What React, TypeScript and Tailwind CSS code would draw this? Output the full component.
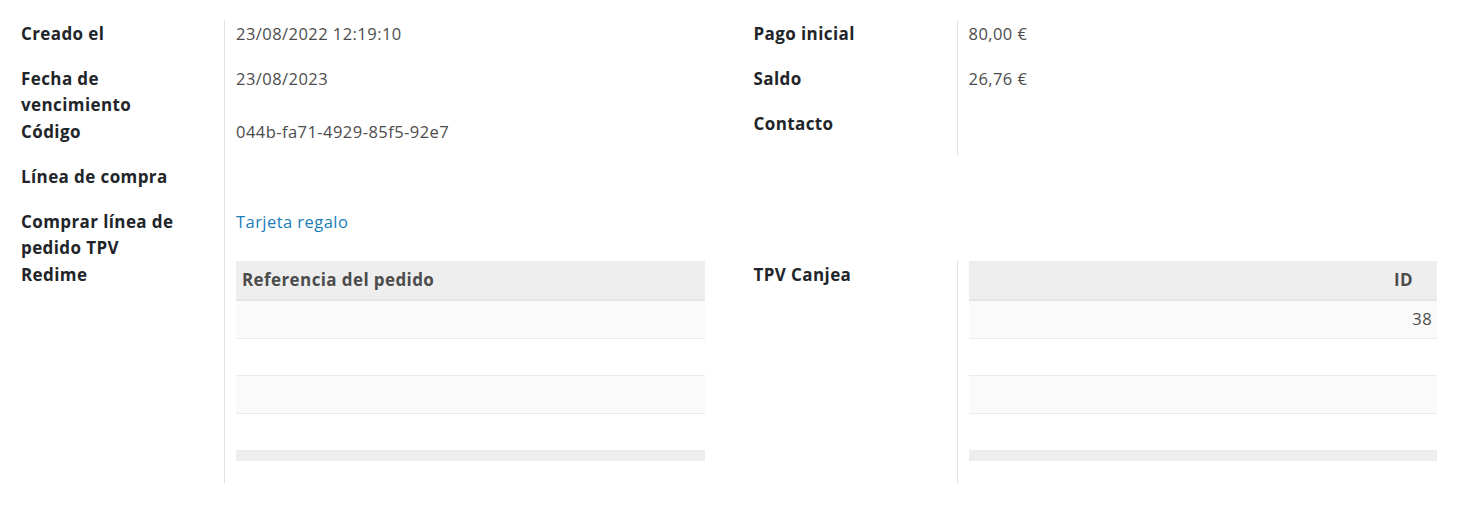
const font = { fontFamily: "'Open Sans', 'Noto Sans', sans-serif" };

type Row = { label: string; value?: React.ReactNode };

const leftRows: Row[] = [
  { label: "Creado el", value: "23/08/2022 12:19:10" },
  { label: "Fecha de vencimiento", value: "23/08/2023" },
  { label: "Código", value: "044b-fa71-4929-85f5-92e7" },
  { label: "Línea de compra" },
  {
    label: "Comprar línea de pedido TPV",
    value: <a className="text-[#1a7db8]">Tarjeta regalo</a>,
  },
];

const rightRows: Row[] = [
  { label: "Pago inicial", value: "80,00 €" },
  { label: "Saldo", value: "26,76 €" },
  { label: "Contacto" },
];

function Label({ children }: { children: React.ReactNode }) {
  return (
    <div className="w-[203px] shrink-0 pr-4 pt-[1px] text-[17px] tracking-[0.4px] font-bold text-[#212529] leading-[26px]">
      {children}
    </div>
  );
}

function Field({ label, value }: Row) {
  return (
    <div className="flex min-h-[45px]">
      <Label>{label}</Label>
      <div className="flex-1 border-l border-[#dee2e6] pl-[11px] pt-[1px] text-[16.5px] tracking-[0.45px] text-[#4c4c4c] leading-[26px]">
        {value}
      </div>
    </div>
  );
}

function SubTable({ header, align, rows }: { header: string; align: "left" | "right"; rows: string[] }) {
  const right = align === "right";
  return (
    <div className="w-full text-[16.5px] tracking-[0.4px]">
      <div
        className={`h-[40px] flex items-center bg-[#eeeeee] border-b-2 border-[#e4e6e8] text-[17px] font-bold text-[#4c4c4c] ${
          right ? "justify-end pr-[24px]" : "pl-[6px]"
        }`}
      >
        {header}
      </div>
      {[0, 1, 2, 3].map((i) => (
        <div
          key={i}
          className={`h-[37.5px] flex items-center border-b border-[#e9ecef] text-[#4c4c4c] ${
            i % 2 === 0 ? "bg-[#fafafa]" : "bg-white"
          } ${right ? "justify-end pr-[5px]" : "pl-[6px]"}`}
        >
          {rows[i] ?? ""}
        </div>
      ))}
      <div className="h-[10px] bg-[#eeeeee]" />
    </div>
  );
}

function TableField({ label, children }: { label: string; children: React.ReactNode }) {
  return (
    <div className="flex">
      <Label>{label}</Label>
      <div className="flex-1 border-l border-[#dee2e6] pl-[11px] pb-[22px]">{children}</div>
    </div>
  );
}

export default function App() {
  return (
    <div className="w-[1465px] h-[512px] bg-white pt-[20px]" style={font}>
      <div className="grid grid-cols-2">
        <div className="pl-[21px] pr-[28px]">
          {leftRows.map((r) => (
            <Field key={r.label} {...r} />
          ))}
        </div>
        <div className="pl-[21px] pr-[28px]">
          {rightRows.map((r) => (
            <Field key={r.label} {...r} />
          ))}
        </div>
      </div>
      <div className="grid grid-cols-2">
        <div className="pl-[21px] pr-[28px]">
          <TableField label="Redime">
            <SubTable header="Referencia del pedido" align="left" rows={[]} />
          </TableField>
        </div>
        <div className="pl-[21px] pr-[28px]">
          <TableField label="TPV Canjea">
            <SubTable header="ID" align="right" rows={["38"]} />
          </TableField>
        </div>
      </div>
    </div>
  );
}
